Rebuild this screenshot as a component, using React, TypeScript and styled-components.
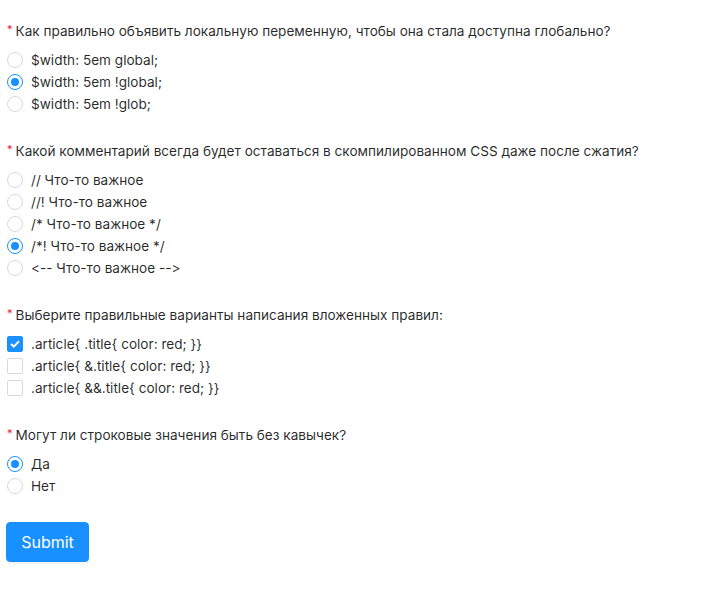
import styled, { createGlobalStyle } from 'styled-components';

const GlobalStyle = createGlobalStyle`
  body {
    margin: 0;
    background: #fff;
    font-family: Inter, 'Noto Sans', sans-serif;
    font-size: 13.6px;
    color: rgba(0, 0, 0, 0.85);
    font-variant-ligatures: none;
    font-feature-settings: 'calt' 0, 'liga' 0;
  }
`;

type Question = {
  title: string;
  kind: 'radio' | 'checkbox';
  options: string[];
  checked: number[];
};

const questions: Question[] = [
  {
    title: 'Как правильно объявить локальную переменную, чтобы она стала доступна глобально?',
    kind: 'radio',
    options: ['$width: 5em global;', '$width: 5em !global;', '$width: 5em !glob;'],
    checked: [1],
  },
  {
    title: 'Какой комментарий всегда будет оставаться в скомпилированном CSS даже после сжатия?',
    kind: 'radio',
    options: [
      '// Что-то важное',
      '//! Что-то важное',
      '/* Что-то важное */',
      '/*! Что-то важное */',
      '<-- Что-то важное -->',
    ],
    checked: [3],
  },
  {
    title: 'Выберите правильные варианты написания вложенных правил:',
    kind: 'checkbox',
    options: [
      '.article{ .title{ color: red; }}',
      '.article{ &.title{ color: red; }}',
      '.article{ &&.title{ color: red; }}',
    ],
    checked: [0],
  },
  {
    title: 'Могут ли строковые значения быть без кавычек?',
    kind: 'radio',
    options: ['Да', 'Нет'],
    checked: [0],
  },
];

export default function App() {
  return (
    <>
      <GlobalStyle />
      <Form onSubmit={(e) => e.preventDefault()}>
        {questions.map((q) => (
          <FormItem key={q.title}>
            <Label>
              <Required>*</Required>
              {q.title}
            </Label>
            <Options>
              {q.options.map((opt, i) => {
                const on = q.checked.includes(i);
                return (
                  <Option key={opt}>
                    {q.kind === 'radio' ? (
                      <RadioMark $checked={on} />
                    ) : (
                      <CheckMark $checked={on}>
                        {on && (
                          <svg width="10" height="8" viewBox="0 0 10 8">
                            <path d="M1 4 L3.8 6.6 L9 1.2" fill="none" stroke="#fff" strokeWidth="2" />
                          </svg>
                        )}
                      </CheckMark>
                    )}
                    <span>{opt}</span>
                  </Option>
                );
              })}
            </Options>
          </FormItem>
        ))}
        <SubmitButton type="submit">Submit</SubmitButton>
      </Form>
    </>
  );
}

const Form = styled.form`
  display: flex;
  flex-direction: column;
  align-items: flex-start;
  padding: 20px 7px 40px;
`;

const FormItem = styled.div`
  display: flex;
  flex-direction: column;
  margin-bottom: 25px;
`;

const Label = styled.div`
  display: flex;
  align-items: center;
  height: 22px;
  line-height: 22px;
  margin-bottom: 7px;
  white-space: nowrap;
`;

const Required = styled.span`
  color: #f5222d;
  margin-right: 3px;
  font-size: 11px;
  line-height: 1;
  position: relative;
  top: -2px;
`;

const Options = styled.div`
  display: flex;
  flex-direction: column;
`;

const Option = styled.label`
  display: flex;
  align-items: center;
  gap: 8px;
  height: 22px;
  line-height: 22px;
  cursor: pointer;
`;

const RadioMark = styled.span<{ $checked: boolean }>`
  position: relative;
  box-sizing: border-box;
  width: 16px;
  height: 16px;
  border-radius: 50%;
  border: 1px solid ${(p) => (p.$checked ? '#1890ff' : '#d9d9d9')};
  background: #fff;

  &::after {
    content: '';
    position: absolute;
    top: 3px;
    left: 3px;
    width: 8px;
    height: 8px;
    border-radius: 50%;
    background: #1890ff;
    display: ${(p) => (p.$checked ? 'block' : 'none')};
  }
`;

const CheckMark = styled.span<{ $checked: boolean }>`
  box-sizing: border-box;
  display: flex;
  align-items: center;
  justify-content: center;
  width: 16px;
  height: 16px;
  border-radius: 2px;
  border: 1px solid ${(p) => (p.$checked ? '#1890ff' : '#d9d9d9')};
  background: ${(p) => (p.$checked ? '#1890ff' : '#fff')};
`;

const SubmitButton = styled.button`
  margin-left: -1px;
  height: 40px;
  width: 83px;
  padding: 0;
  border: 1px solid #1890ff;
  border-radius: 4px;
  background: #1890ff;
  color: #fff;
  font-family: Inter, 'Noto Sans', sans-serif;
  font-size: 16px;
  box-shadow: 0 2px 0 rgba(0, 0, 0, 0.045);
  cursor: pointer;
`;
